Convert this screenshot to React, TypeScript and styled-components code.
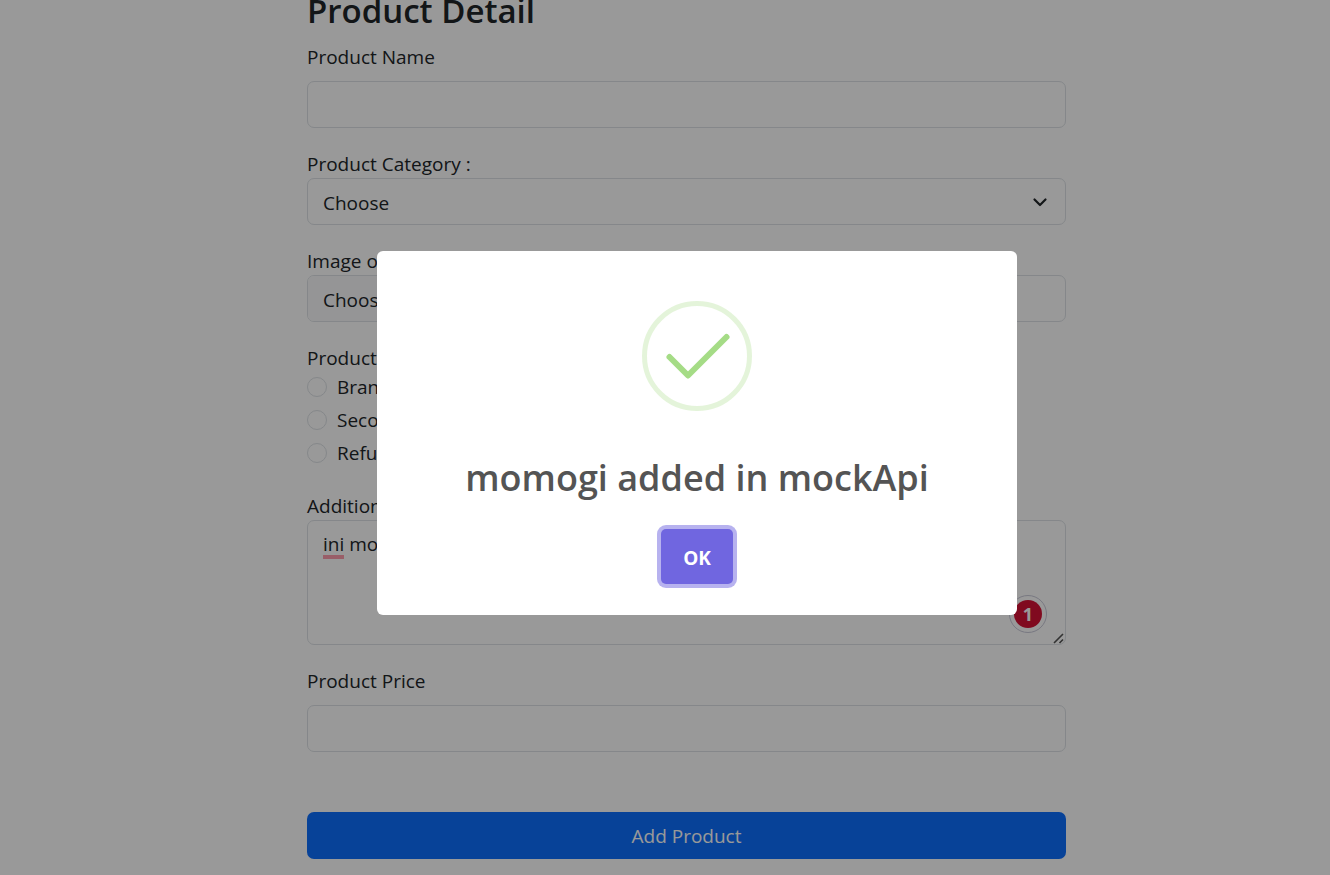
import React, { useState } from "react";
import styled, { createGlobalStyle } from "styled-components";

const GlobalStyle = createGlobalStyle`
  *, *::before, *::after { box-sizing: border-box; }
  body {
    margin: 0;
    overflow: hidden;
    background: #fff;
    color: #212529;
    font: 400 19px/30px "Segoe UI", "Open Sans", "Noto Sans", sans-serif;
  }
  button, input, select, textarea { font: inherit; color: inherit; }
`;

const Page = styled.main`
  padding: 0 0 16px 43px;
`;

const Form = styled.form`
  display: flex;
  flex-direction: column;
  gap: 20px;
  width: 100%;
  max-width: 759px;
  margin: -9px auto 0;
`;

const Heading = styled.h1`
  margin: 0 0 -9px;
  font-size: 33px;
  line-height: 40px;
  font-weight: 600;
`;

const Field = styled.div<{ $gap?: number }>`
  display: flex;
  flex-direction: column;
  gap: ${(p) => p.$gap ?? 0}px;
`;

const StackedLabel = styled.label`
  height: 30px;
  line-height: 32px;
`;

const Group = styled.fieldset`
  margin: 0;
  padding: 0 0 2px;
  border: 0;
`;

const Legend = styled.legend`
  height: 30px;
  padding: 0;
  line-height: 32px;
`;

const RadioList = styled.div`
  display: flex;
  flex-direction: column;
  gap: 3px;
`;

const RadioRow = styled.label`
  display: flex;
  align-items: center;
  gap: 10px;
`;

const Radio = styled.input`
  appearance: none;
  width: 20px;
  height: 20px;
  margin: 0;
  border: 1px solid #dee2e6;
  border-radius: 50%;
  background: #fff;
  &:checked { border: 6px solid #0d6efd; }
`;

const controlStyle = `
  display: block;
  width: 100%;
  border: 1px solid #dee2e6;
  border-radius: 7px;
  background: #fff;
  outline: 0;
`;

const TextInput = styled.input`
  ${controlStyle}
  height: 47px;
  padding: 8px 15px;
`;

const FileInput = styled.input`
  ${controlStyle}
  height: 47px;
  padding: 8px 15px;
  overflow: hidden;
  &::file-selector-button {
    margin: -8px 15px -8px -15px;
    padding: 9px 15px 7px;
    border: 0;
    border-right: 1px solid #dee2e6;
    background: #f8f9fa;
    color: #212529;
    font: inherit;
  }
`;

const SelectWrap = styled.div`
  display: grid;
  align-items: center;
  > * { grid-area: 1 / 1; }
  > svg { justify-self: end; margin-right: 16px; pointer-events: none; }
`;

const Select = styled.select`
  ${controlStyle}
  appearance: none;
  height: 47px;
  padding: 9px 45px 7px 15px;
`;

const TextAreaWrap = styled.div`
  position: relative;
  margin-bottom: 1px;
`;

const TextArea = styled.textarea`
  ${controlStyle}
  height: 125px;
  padding: 8px 15px;
  resize: none;
`;

const Grip = styled.svg`
  position: absolute;
  right: 2px;
  bottom: 1px;
`;

const SpellMark = styled.span`
  position: absolute;
  left: 16px;
  top: 35px;
  width: 21px;
  height: 4px;
  background: #ff9dad;
`;

const IssueBadge = styled.span`
  position: absolute;
  right: 19px;
  bottom: 12px;
  display: grid;
  place-items: center;
  width: 38px;
  height: 38px;
  border: 1px solid #c9c9d8;
  border-radius: 50%;
  background: #fff;
  > b {
    width: 28px;
    height: 28px;
    border-radius: 50%;
    background: #d51235;
    color: #fff;
    font-size: 18px;
    line-height: 28px;
    text-align: center;
  }
`;

const SubmitButton = styled.button`
  height: 47px;
  margin-top: 40px;
  border: 0;
  border-radius: 7px;
  background: #0d6efd;
  color: #fff;
`;

const Backdrop = styled.div`
  position: fixed;
  inset: 0;
  display: flex;
  align-items: center;
  justify-content: center;
  padding: 0 0 9px 64px;
  background: rgba(0, 0, 0, 0.4);
`;

const Dialog = styled.div`
  display: flex;
  flex-direction: column;
  align-items: center;
  width: 640px;
  max-width: 100%;
  padding: 50px 20px 31px;
  border-radius: 6px;
  background: #fff;
`;

const DialogTitle = styled.h2`
  margin: 40px 0 24px;
  color: #545454;
  font-size: 36px;
  line-height: 54px;
  font-weight: 600;
  text-align: center;
`;

const ConfirmButton = styled.button`
  width: 72px;
  height: 55px;
  padding: 2px 0 0;
  border: 0;
  border-radius: 5px;
  background: #7066e0;
  box-shadow: 0 0 0 4px rgba(112, 102, 224, 0.5);
  color: #fff;
  font-weight: 700;
  outline: 0;
`;

const conditions = ["Brand New", "Second Hand", "Refurbished"];

export default function App() {
  const [open, setOpen] = useState(true);

  return (
    <>
      <GlobalStyle />
      <Page>
        <Form onSubmit={(e) => { e.preventDefault(); setOpen(true); }}>
          <Heading>Product Detail</Heading>
          <Field $gap={9}>
            <label htmlFor="name">Product Name</label>
            <TextInput id="name" type="text" />
          </Field>
          <Field>
            <StackedLabel htmlFor="category">Product Category :</StackedLabel>
            <SelectWrap>
              <Select id="category" defaultValue="">
                <option value="">Choose</option>
              </Select>
              <svg width="20" height="20" viewBox="0 0 20 20" fill="none" aria-hidden="true">
                <path d="M4.500 7.500l5.500 5.500 5.500-5.500" stroke="#212529" strokeWidth="2.200" strokeLinecap="round" strokeLinejoin="round" />
              </svg>
            </SelectWrap>
          </Field>
          <Field>
            <StackedLabel htmlFor="image">Image of Product</StackedLabel>
            <FileInput id="image" type="file" />
          </Field>
          <Group>
            <Legend>Product Condition :</Legend>
            <RadioList>
              {conditions.map((c) => (
                <RadioRow key={c}>
                  <Radio type="radio" name="condition" value={c} />
                  {c}
                </RadioRow>
              ))}
            </RadioList>
          </Group>
          <Field>
            <StackedLabel htmlFor="description">Additional Description</StackedLabel>
            <TextAreaWrap>
              <TextArea id="description" defaultValue="ini momogi" spellCheck={false} />
              <SpellMark />
              <IssueBadge><b>1</b></IssueBadge>
              <Grip width="11" height="11" viewBox="0 0 11 11" aria-hidden="true">
                <path d="M1 10L10 1M6.500 10L10 6.500" stroke="#555" strokeWidth="1.600" fill="none" />
              </Grip>
            </TextAreaWrap>
          </Field>
          <Field $gap={9}>
            <label htmlFor="price">Product Price</label>
            <TextInput id="price" type="text" />
          </Field>
          <SubmitButton type="submit">Add Product</SubmitButton>
        </Form>
      </Page>
      {open && (
        <Backdrop>
          <Dialog role="dialog" aria-modal="true" aria-labelledby="dialog-title">
            <svg width="110" height="110" viewBox="0 0 110 110" fill="none" aria-hidden="true">
              <circle cx="55" cy="55" r="52.5" stroke="#a5dc86" strokeOpacity="0.3" strokeWidth="5" />
              <path d="M27.5 56L46 74.500L84.500 36" stroke="#a5dc86" strokeWidth="6" strokeLinecap="round" strokeLinejoin="round" />
            </svg>
            <DialogTitle id="dialog-title">momogi added in mockApi</DialogTitle>
            <ConfirmButton type="button" onClick={() => setOpen(false)}>OK</ConfirmButton>
          </Dialog>
        </Backdrop>
      )}
    </>
  );
}
